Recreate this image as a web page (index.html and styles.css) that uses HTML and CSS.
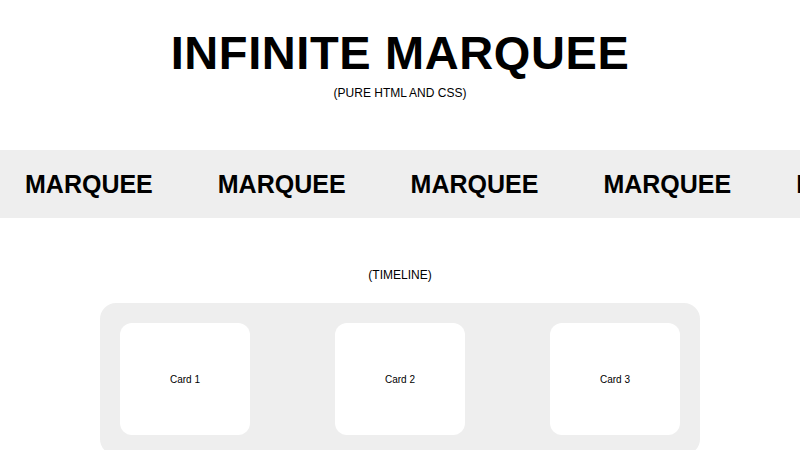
FILE: index.html
```html
<!DOCTYPE html>
<html lang="en">
<head>
<meta charset="utf-8">
<title>Infinite Marquee</title>
<link rel="stylesheet" href="styles.css">
</head>
<body>
  <header class="intro">
    <h1 class="intro-title">INFINITE MARQUEE</h1>
    <p class="intro-note">(PURE HTML AND CSS)</p>
  </header>

  <section class="marquee">
    <div class="marquee-track">
      <span class="marquee-item">MARQUEE</span>
      <span class="marquee-item">MARQUEE</span>
      <span class="marquee-item">MARQUEE</span>
      <span class="marquee-item">MARQUEE</span>
      <span class="marquee-item">MARQUEE</span>
    </div>
  </section>

  <section class="timeline">
    <p class="timeline-label">(TIMELINE)</p>
    <div class="timeline-board">
      <div class="card">Card 1</div>
      <div class="card">Card 2</div>
      <div class="card">Card 3</div>
    </div>
  </section>
</body>
</html>
```
FILE: styles.css
```css
* {
  box-sizing: border-box;
}

html, body {
  margin: 0;
  padding: 0;
  background: #fff;
  color: #000;
  font-family: "Liberation Sans", Arial, sans-serif;
}

body {
  overflow: hidden;
}

/* heading block */
.intro {
  padding-top: 29px;
  text-align: center;
}

.intro-title {
  margin: 0;
  font-size: 47px;
  line-height: 48px;
  font-weight: 700;
  letter-spacing: 0.6px;
}

.intro-note {
  margin: 8px 0 0;
  font-size: 12px;
  line-height: 16px;
}

/* marquee band */
.marquee {
  margin-top: 49px;
  height: 68px;
  background: #eeeeee;
  overflow: hidden;
}

.marquee-track {
  display: flex;
  gap: 65px;
  padding-left: 25px;
  height: 100%;
  align-items: center;
  white-space: nowrap;
}

.marquee-item {
  flex: none;
  font-size: 25px;
  font-weight: 700;
  line-height: 30px;
}

/* timeline */
.timeline {
  padding-top: 49px;
}

.timeline-label {
  margin: 0;
  text-align: center;
  font-size: 12px;
  line-height: 16px;
}

.timeline-board {
  width: 600px;
  margin: 20px auto 0;
  padding: 20px;
  display: flex;
  justify-content: space-between;
  background: #eeeeee;
  border-radius: 16px;
}

.card {
  width: 130px;
  height: 112px;
  display: flex;
  align-items: center;
  justify-content: center;
  background: #fff;
  border-radius: 12px;
  font-size: 10px;
}
```
